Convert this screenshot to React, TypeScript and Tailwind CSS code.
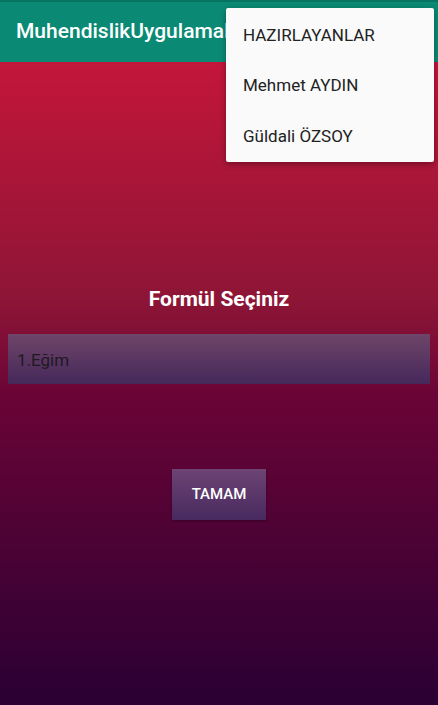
import React from "react";

export default function App() {
  return (
    <div className="relative w-[438px] h-[705px] overflow-hidden flex flex-col font-['Roboto','Liberation_Sans',sans-serif]">
      <div className="h-[62px] shrink-0 bg-[#0a8a74] flex items-center pl-[16px] border-t-2 border-[#077462]">
        <span className="text-white text-[21px] font-medium">MuhendislikUygulamaları</span>
      </div>
      <div className="flex-1 bg-[linear-gradient(180deg,#c3163a_0%,#8d1536_37%,#6a0436_52%,#2a0033_100%)] flex flex-col items-center">
        <div className="h-[222px] shrink-0" />
        <div className="text-white text-[21px] font-bold leading-[30px]">Formül Seçiniz</div>
        <div className="h-[20px] shrink-0" />
        <div className="w-[422px] h-[50px] bg-[linear-gradient(180deg,#6f4569_0%,#45285a_100%)] flex items-center pl-[9px] pt-[3px]">
          <span className="text-[#1e1a24] text-[17px]">1.Eğim</span>
        </div>
        <div className="h-[85px] shrink-0" />
        <div className="w-[94px] h-[51px] bg-[linear-gradient(180deg,#6d4474_0%,#48295f_100%)] flex items-center justify-center shadow-[0_1px_2px_rgba(0,0,0,0.3)]">
          <span className="text-white text-[15px] font-medium">TAMAM</span>
        </div>
      </div>
      <div className="absolute left-[226px] top-[8px] w-[208px] h-[154px] bg-[#fafafa] rounded-[2px] shadow-[0_2px_6px_rgba(0,0,0,0.35)] flex flex-col pt-[2px]">
        <div className="h-[51.5px] flex items-center pl-[17px] text-[17px] text-[#222]">HAZIRLAYANLAR</div>
        <div className="h-[51.5px] flex items-center pl-[17px] text-[17px] text-[#222]">Mehmet AYDIN</div>
        <div className="h-[51.5px] flex items-center pl-[17px] text-[17px] text-[#222]">Güldali ÖZSOY</div>
      </div>
    </div>
  );
}
